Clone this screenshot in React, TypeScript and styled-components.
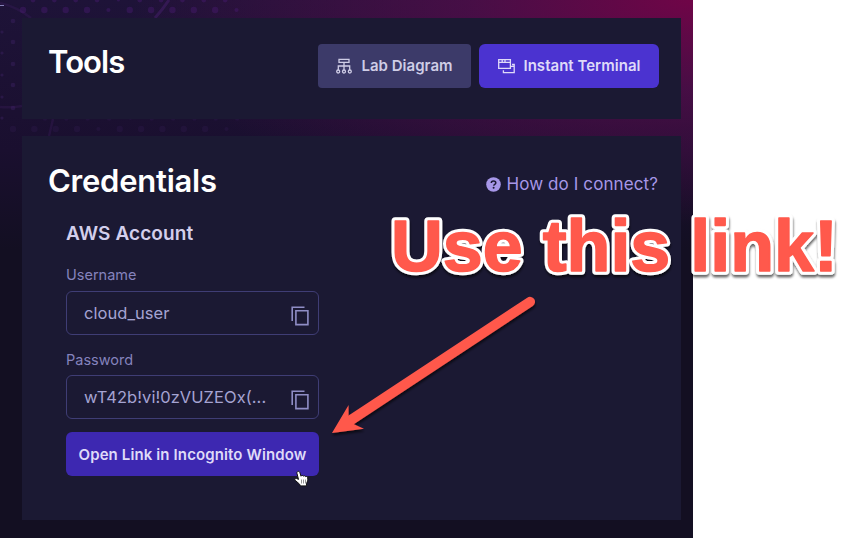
import React from 'react';
import styled, { createGlobalStyle } from 'styled-components';

const GlobalStyle = createGlobalStyle`
  * { box-sizing: border-box; }
  body {
    margin: 0;
    background: #fff;
    font-family: Inter, 'Liberation Sans', sans-serif;
  }
`;

const Stage = styled.div`
  position: relative;
  width: 855px;
  height: 538px;
  overflow: hidden;
`;

const Page = styled.main`
  position: relative;
  display: flex;
  flex-direction: column;
  gap: 17px;
  width: 693px;
  height: 538px;
  padding: 18px 12px 18px 22px;
  background:
    radial-gradient(ellipse 560px 225px at 100% 0, rgba(116, 4, 72, 0.95), rgba(88, 12, 76, 0.7) 40%, rgba(60, 14, 70, 0) 100%),
    linear-gradient(#1e1338 0, #1a0f2f 150px, #130f22 250px);
`;

const Backdrop = styled.svg`
  position: absolute;
  inset: 0;
`;

const Panel = styled.section<{ $height: number }>`
  position: relative;
  height: ${(p) => p.$height}px;
  padding: 26px 22px 0 26px;
  background: #1b1933;
`;

const PanelHeader = styled.header`
  display: flex;
  justify-content: space-between;
  align-items: flex-start;
`;

const Title = styled.h2<{ $tracking: number; $top: number }>`
  margin: ${(p) => p.$top}px 0 0;
  color: #fff;
  font-size: 31px;
  font-weight: 600;
  line-height: 32px;
  letter-spacing: ${(p) => p.$tracking}px;
`;

const Actions = styled.div`
  display: flex;
  gap: 8px;
`;

const Button = styled.button<{ $tone: 'muted' | 'bright' | 'deep'; $width: number }>`
  display: flex;
  align-items: center;
  justify-content: center;
  gap: 9px;
  width: ${(p) => p.$width}px;
  height: 44px;
  padding: ${(p) => (p.$tone === 'deep' ? '1px 0 0' : '0 0 1px')};
  border: 0;
  border-radius: ${(p) => (p.$tone === 'muted' ? 4 : 6)}px;
  background: ${(p) => ({ muted: '#3c3a69', bright: '#4b33d0', deep: '#3d28b1' })[p.$tone]};
  color: ${(p) => (p.$tone === 'muted' ? '#cfcde6' : '#dfdaf8')};
  font: 600 15px/20px Inter, sans-serif;
  letter-spacing: ${(p) => (p.$tone === 'deep' ? 0.12 : 0.02)}px;
  white-space: nowrap;
`;

const HelpLink = styled.a`
  display: flex;
  align-items: center;
  gap: 5px;
  margin: 11px 1px 0 0;
  color: #a797e8;
  font-size: 17px;
  line-height: 22px;
  letter-spacing: 0.1px;
`;

const Account = styled.div`
  display: flex;
  flex-direction: column;
  width: 253px;
  margin: 25px 0 0 18px;
`;

const AccountName = styled.h3`
  margin: 0 0 19px;
  color: #d3cfec;
  font-size: 19px;
  font-weight: 600;
  line-height: 24px;
  letter-spacing: 0.1px;
`;

const FieldLabel = styled.label`
  height: 26px;
  color: #8583bd;
  font-size: 14.5px;
  line-height: 20px;

  div + & {
    height: 25px;
    margin-top: 1px;
  }
`;

const Field = styled.div`
  display: flex;
  align-items: center;
  justify-content: space-between;
  height: 44px;
  margin-bottom: 14px;
  padding: 0 9px 0 17px;
  border: 1px solid #3f3d75;
  border-radius: 6px;
  color: #a5a3d2;
  font-size: 16.5px;
  line-height: 20px;
  letter-spacing: 0.05px;

  &:last-of-type { margin-bottom: 13px; }
`;

const CopyIcon = styled.svg`
  margin-top: 5px;
`;

const Annotations = styled.svg`
  position: absolute;
  inset: 0;
  pointer-events: none;
`;

const dotRows = [
  { y: 0, x: 33, size: 2.4 },
  { y: 10, x: 23, size: 3.2 },
  { y: 118.5, x: 45, size: 2.2 },
  { y: 129, x: 13, size: 3.2 },
];
const edgeDots = [[13, 21], [2, 32], [13, 42], [2, 53], [13, 64], [2, 75], [13, 85], [2, 97], [13, 108], [2, 118]];

function Background() {
  return (
    <Backdrop width="693" height="538" fill="none">
      {dotRows.map((row) =>
        Array.from({ length: 11 }, (_, i) => {
          const x = row.x + i * 21.35;
          if (x > 240) return null;
          const small = i % 6 === 4;
          return <circle key={`${row.y}-${i}`} cx={x} cy={row.y} r={small ? row.size * 0.65 : row.size} fill={row.y < 50 ? '#4b1c75' : '#2c194a'} opacity=".4" />;
        }),
      )}
      {edgeDots.map(([x, y]) => (
        <circle key={y} cx={x} cy={y} r={x > 5 ? 2.3 : 1.6} fill="#3b2162" opacity=".45" />
      ))}
      <path d="M169 0Q163 9 155 18" stroke="#51227a" strokeWidth="3" opacity=".4" />
      <path d="M0 3Q17 7 31 18M0 107Q12 108 22 106M53 119Q51 128 49 136" stroke="#46206c" strokeWidth="2.5" opacity=".25" />
      <path d="M0 5.5H4" stroke="#8582b8" />
    </Backdrop>
  );
}

function DiagramIcon() {
  return (
    <svg width="16" height="16" viewBox="0 0 16 16" fill="none" stroke="currentColor" strokeWidth="1.3">
      <path d="M3 1.3H13V4.4H3ZM8 4.4V12M2.3 12V8H13.7V12" />
      <circle cx="2.2" cy="13.5" r="1.5" />
      <circle cx="8" cy="13.5" r="1.5" />
      <circle cx="13.8" cy="13.5" r="1.5" />
    </svg>
  );
}

function TerminalIcon() {
  return (
    <svg width="17" height="16" viewBox="0 0 17 16" fill="none" stroke="currentColor" strokeWidth="1.3">
      <path d="M.7 1.6H12.4V10.3H.7ZM.7 4.3H12.4M4.2 1.6V4.3M7 1.6V4.3M12.4 8.4H16.2M14 6.5H16.2V14.6H5.4V12.2" />
    </svg>
  );
}

function HelpIcon() {
  return (
    <svg width="15" height="15" viewBox="0 0 15 15">
      <circle cx="7.5" cy="7.5" r="7.3" fill="#a797e8" />
      <path d="M5.3 6.1C5.3 4.7 6.3 4 7.5 4S9.8 4.7 9.8 5.9C9.8 7.3 7.8 7.2 7.6 8.7" fill="none" stroke="#1b1933" strokeWidth="1.5" />
      <circle cx="7.6" cy="10.8" r="1" fill="#1b1933" />
    </svg>
  );
}

function Copy() {
  return (
    <CopyIcon width="18" height="20" viewBox="0 0 18 20" fill="none" stroke="#8f8dc6" strokeWidth="1.6">
      <path d="M1.2 15V1.2H13.5M4.9 4.8H16.9V18.6H4.9Z" />
    </CopyIcon>
  );
}

function Overlay() {
  return (
    <Annotations width="855" height="538">
      <defs>
        <filter id="shadow" x="-5%" y="-10%" width="110%" height="130%">
          <feDropShadow dx="0.5" dy="2.6" stdDeviation="1.3" floodColor="#000" floodOpacity=".6" />
        </filter>
      </defs>
      <g fontFamily="'Liberation Sans', Arial, sans-serif" fontSize="71.8" fontWeight="700" strokeLinejoin="round">
        <use href="#headline" stroke="#fff" strokeWidth="7.6" filter="url(#shadow)" />
        <text id="headline" x="391" y="271">
          Use this link!
        </text>
        <use href="#headline" fill="#ff594c" stroke="#ff594c" strokeWidth="1.6" />
      </g>
      <g filter="url(#shadow)" fill="#ff594c">
        <path d="M530 301.8L351 420" stroke="#ff594c" strokeWidth="10" strokeLinecap="round" />
        <path d="M332 433L348.6 405V418L354 424.3L364 428.8Z" />
      </g>
      <path
        d="M297.6 471.6C298.7 470.8 299.6 471.7 299.9 472.7L301 476.2C301.4 475.2 303 475.2 303.4 476.2C304 475.4 305.3 475.7 305.6 476.6C306.5 476.1 307.6 476.7 307.7 477.7C308 480 307.4 481.8 306.6 483.2L306.4 485.9H300.5L299.6 484.2L295.2 480.3C294.2 479 295.5 477.9 296.7 478.5L298.5 479.4L297 473.5C296.8 472.7 297 472 297.6 471.6Z"
        fill="#fff"
        stroke="#111"
        strokeWidth="1"
      />
      <path d="M301.5 479.5V483.5M303.5 479.5V483.5M305.5 479.5V483.5" stroke="#777" strokeWidth=".8" />
    </Annotations>
  );
}

export default function App() {
  return (
    <>
      <GlobalStyle />
      <Stage>
        <Page>
          <Background />
          <Panel $height={101}>
            <PanelHeader>
              <Title $tracking={-0.9} $top={2}>Tools</Title>
              <Actions>
                <Button $tone="muted" $width={153}>
                  <DiagramIcon />
                  Lab Diagram
                </Button>
                <Button $tone="bright" $width={180}>
                  <TerminalIcon />
                  Instant Terminal
                </Button>
              </Actions>
            </PanelHeader>
          </Panel>
          <Panel $height={384}>
            <PanelHeader>
              <Title $tracking={-0.25} $top={3}>Credentials</Title>
              <HelpLink>
                <HelpIcon />
                How do I connect?
              </HelpLink>
            </PanelHeader>
            <Account>
              <AccountName>AWS Account</AccountName>
              <FieldLabel>Username</FieldLabel>
              <Field>
                cloud_user
                <Copy />
              </Field>
              <FieldLabel>Password</FieldLabel>
              <Field>
                wT42b!vi!0zVUZEOx(...
                <Copy />
              </Field>
              <Button $tone="deep" $width={253}>
                Open Link in Incognito Window
              </Button>
            </Account>
          </Panel>
        </Page>
        <Overlay />
      </Stage>
    </>
  );
}
